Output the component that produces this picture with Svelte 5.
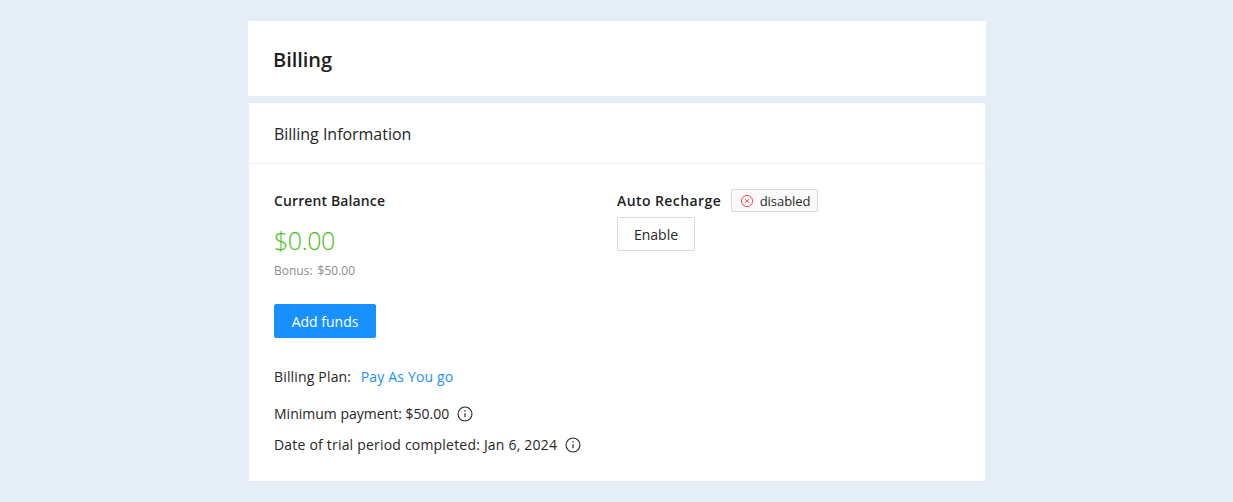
<script>
  const infoPath = "M8 1a7 7 0 1 0 0 14A7 7 0 0 0 8 1z";
</script>

<div class="page">
  <header class="head"><h1>Billing</h1></header>
  <section class="card">
    <div class="card-title">Billing Information</div>
    <div class="card-body">
      <div class="cols">
        <div class="col">
          <div class="label balance">Current Balance</div>
          <div class="amount">$0.00</div>
          <div class="bonus"><span>Bonus:</span><span>$50.00</span></div>
          <button class="primary">Add funds</button>
        </div>
        <div class="col">
          <div class="recharge">
            <span class="label auto">Auto Recharge</span>
            <span class="tag">
              <svg width="14" height="14" viewBox="0 0 14 14" fill="none" stroke="#ff4d4f">
                <circle cx="7" cy="7" r="5.6" stroke-width="1" />
                <path d="M5 5l4 4M9 5l-4 4" stroke-width="1" />
              </svg>
              disabled
            </span>
          </div>
          <button class="default">Enable</button>
        </div>
      </div>
      <div class="plan"><span>Billing Plan:</span><a href="#plan">Pay As You go</a></div>
      <div class="line first">
        <span>Minimum payment: $50.00</span>
        <svg width="16" height="16" viewBox="0 0 16 16" fill="none" stroke="#262626">
          <path d={infoPath} stroke-width="1.1" />
          <path d="M8 7.2v4" stroke-width="1.2" />
          <circle cx="8" cy="5" r=".8" fill="#262626" stroke="none" />
        </svg>
      </div>
      <div class="line trial">
        <span>Date of trial period completed: Jan 6, 2024</span>
        <svg width="16" height="16" viewBox="0 0 16 16" fill="none" stroke="#262626">
          <path d={infoPath} stroke-width="1.1" />
          <path d="M8 7.2v4" stroke-width="1.2" />
          <circle cx="8" cy="5" r=".8" fill="#262626" stroke="none" />
        </svg>
      </div>
    </div>
  </section>
</div>

<style>
  :global(body) {
    margin: 0;
    background: #e5edf7;
  }
  .page {
    width: 738px;
    margin: 0 auto;
    padding: 21px 0 21px;
    box-sizing: border-box;
    height: 502px;
    font-family: "Open Sans", "Noto Sans", sans-serif;
    color: #262626;
    font-size: 14px;
  }
  .head {
    background: #fff;
    height: 75px;
    display: flex;
    align-items: center;
    padding: 3px 0 0 25.5px;
    box-sizing: border-box;
    margin-bottom: 7px;
  }
  h1 {
    margin: 0;
    font-size: 20px;
    font-weight: 600;
    letter-spacing: -0.05px;
    line-height: 28px;
    color: #1f1f1f;
  }
  .card {
    background: #fff;
    margin: 0 1px;
    height: 378px;
    box-sizing: border-box;
  }
  .card-title {
    height: 61px;
    border-bottom: 1px solid #f0f0f0;
    box-sizing: border-box;
    padding: 2px 0 0 25.5px;
    display: flex;
    align-items: center;
    font-size: 16px;
    letter-spacing: -0.03px;
  }
  .card-body {
    padding: 25px 25px 0 25.5px;
  }
  .cols {
    display: grid;
    grid-template-columns: 343px 1fr;
  }
  .label {
    font-weight: 600;
    line-height: 24px;
    color: #1f1f1f;
  }
  .balance {
    letter-spacing: 0.12px;
  }
  .auto {
    letter-spacing: 0.42px;
  }
  .amount {
    font-size: 25px;
    line-height: 32px;
    color: #48bf0e;
    margin-top: 11px;
    letter-spacing: -0.45px;
    font-weight: 300;
  }
  .bonus {
    font-size: 12px;
    line-height: 20px;
    color: #8c8c8c;
    margin-top: 5px;
    display: flex;
    gap: 5px;
  }
  button {
    font: inherit;
    border-radius: 2px;
    height: 34px;
    padding: 0;
    display: block;
  }
  .primary {
    background: #1890ff;
    border: 1px solid #1890ff;
    color: #fff;
    width: 102px;
    margin-top: 23px;
    box-shadow: 0 2px 0 rgba(0, 0, 0, 0.03);
  }
  .default {
    background: #fff;
    border: 1px solid #d9d9d9;
    color: #262626;
    width: 78px;
    margin-top: 4px;
  }
  .recharge {
    display: flex;
    align-items: center;
    gap: 10px;
    height: 24px;
  }
  .tag {
    display: inline-flex;
    align-items: center;
    gap: 6px;
    height: 23px;
    margin-top: -1px;
    box-sizing: border-box;
    padding: 0 6.5px 0 7.5px;
    background: #fafafa;
    border: 1px solid #d9d9d9;
    border-radius: 2px;
    font-size: 13px;
    letter-spacing: -0.05px;
    color: #262626;
  }
  .plan {
    margin-top: 27px;
    line-height: 24px;
    display: flex;
    gap: 9.5px;
    letter-spacing: 0.17px;
  }
  a {
    color: #1890ff;
    text-decoration: none;
  }
  .line {
    display: flex;
    align-items: center;
    gap: 8px;
    line-height: 22px;
    margin-top: 9px;
  }
  .line.first {
    margin-top: 14px;
  }
  .trial span {
    letter-spacing: 0.2px;
  }
</style>
